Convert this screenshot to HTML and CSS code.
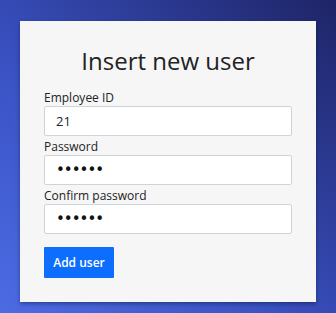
FILE: index.html
```html
<!DOCTYPE html>
<html lang="en">
<head>
    <meta charset="UTF-8">
    <meta name="viewport" content="width=device-width, initial-scale=1.0">
    <title>Insert new user</title>
    <link rel="stylesheet" href="styles.css">
</head>
<body>
    <div class="card">
        <h1 class="title">Insert new user</h1>
        <form class="user-form">
            <label for="employee-id">Employee ID</label>
            <input type="text" id="employee-id" value="21">

            <label for="password">Password</label>
            <input type="password" id="password" value="secret">

            <label for="confirm">Confirm password</label>
            <input type="password" id="confirm" value="secret">

            <button type="button" class="button">Add user</button>
        </form>
    </div>
</body>
</html>
```

FILE: styles.css
```css
body {
    font-family: "Open Sans", "Noto Sans", sans-serif;
    margin: 0;
    padding: 21px 20px 0;
    height: 100vh;
    box-sizing: border-box;
    overflow: hidden;
    background: linear-gradient(to top right, #4c6ce4, #3a52c4 40%, #1e2466);
}

.card {
    background: #f6f6f6;
    padding: 22px 24px 24px;
    box-shadow: 0 2px 4px rgba(0, 0, 0, 0.35);
}

.title {
    margin: 0 0 10px;
    font-size: 24px;
    font-weight: 400;
    color: #222;
    text-align: center;
    line-height: 36px;
}

.user-form {
    display: flex;
    flex-direction: column;
}

label {
    font-size: 12px;
    color: #222;
    line-height: 17px;
}

input {
    height: 30px;
    box-sizing: border-box;
    border: 1px solid #ced4da;
    border-radius: 2px;
    background: #fff;
    padding: 0 11px;
    margin-bottom: 2px;
    font-family: inherit;
    font-size: 13px;
    color: #222;
}

input[type="password"] {
    font-family: "DejaVu Sans", sans-serif;
    font-size: 15px;
    letter-spacing: -1px;
    color: #111;
}

.button {
    align-self: flex-start;
    margin-top: 11px;
    width: 70px;
    height: 31px;
    background: #0d6efd;
    color: #fff;
    border: none;
    border-radius: 1px;
    font-family: inherit;
    font-size: 12px;
    font-weight: 600;
    cursor: pointer;
}
```
